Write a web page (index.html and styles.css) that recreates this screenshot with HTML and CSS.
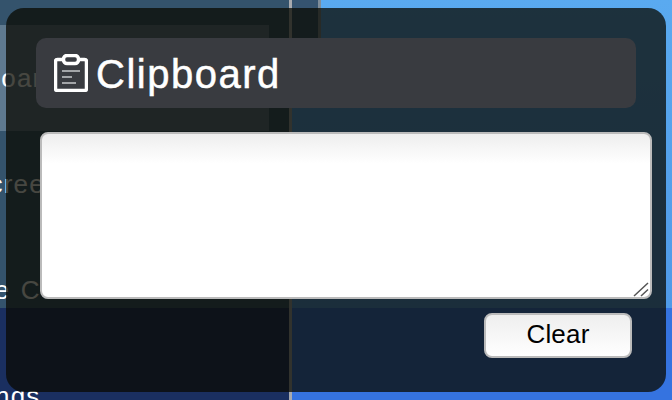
FILE: index.html
```html
<!DOCTYPE html>
<html lang="en">
<head>
<meta charset="utf-8">
<title>Clipboard</title>
<link rel="stylesheet" href="styles.css">
</head>
<body>
<div class="scene">
  <aside class="sidebar">
    <div class="sidebar-top"></div>
    <div class="item item-selected"><span class="item-label label-a">Clipboard</span></div>
    <div class="item"><span class="item-label label-b">Screenshot</span></div>
    <div class="item"><span class="item-label label-c">Remote Control</span></div>
    <div class="item"><span class="item-label label-d">Settings</span></div>
  </aside>
  <div class="divider"></div>
  <main class="main">
    <div class="main-top"></div>
  </main>

  <section class="panel">
    <header class="panel-header">
      <svg class="panel-icon" viewBox="0 0 34 38" width="34" height="38" aria-hidden="true">
        <path class="icon-body" d="M8 5.500H3.500a2 2 0 0 0-2 2v27a2 2 0 0 0 2 2h27a2 2 0 0 0 2-2v-27a2 2 0 0 0-2-2H26"/>
        <rect class="icon-clip" x="9.500" y="1.500" width="15" height="8" rx="3.500"/>
        <path class="icon-line" d="M8 17H26M8 23H18M8 29H22"/>
      </svg>
      <h1 class="panel-title">Clipboard</h1>
    </header>
    <div class="clip-wrap">
      <textarea class="clip-text"></textarea>
      <svg class="clip-grip" viewBox="0 0 16 15" width="16" height="15" aria-hidden="true">
        <path d="M1 14L15 1M8 14L15 7.500"/>
      </svg>
    </div>
    <div class="panel-actions">
      <button class="clear-btn" type="button">Clear</button>
    </div>
  </section>
</div>
</body>
</html>
```
FILE: styles.css
```css
* { box-sizing: border-box; }
html, body { margin: 0; padding: 0; }
body { width: 672px; height: 400px; overflow: hidden; font-family: "Liberation Sans", Arial, sans-serif; }

.scene { position: relative; display: flex; width: 672px; height: 400px; overflow: hidden; background: #3573e0; }

.sidebar { flex: none; display: flex; flex-direction: column; width: 289px; height: 400px; background: linear-gradient(#34536c 308px, #1a2f60 308px); overflow: hidden; }
.sidebar-top { flex: none; height: 25px; }
.item { flex: none; height: 106px; display: flex; align-items: center; white-space: nowrap; color: #fff; font-size: 26px; letter-spacing: 1.2px; }
.item-selected { width: 269px; background: #5f7a90; overflow: hidden; }
.label-a { margin-left: -64px; }
.label-b { margin-left: -29px; }
.label-c { margin-left: -88px; word-spacing: 2px; }
.label-d { margin-left: -63px; }

.divider { flex: none; width: 3px; height: 400px; background: #a8aaae; }

.main { flex: 1; height: 400px; background: linear-gradient(#5aaaf0, #4f9ae8 308px, #3573e0 308px); }
.main-top { width: 29px; height: 38px; background: #35536f; border-right: 3px solid #7f8d99; }

.panel { position: absolute; left: 6px; top: 8px; width: 660px; height: 384px; padding: 30px 14px 0 30px; border-radius: 18px; background: rgba(10, 10, 2, 0.75); display: flex; flex-direction: column; }
.panel-header { flex: none; height: 70px; margin-right: 16px; display: flex; align-items: center; gap: 8px; padding-left: 18px; background: #393b40; border-radius: 10px; }
.panel-icon { flex: none; }
.icon-body, .icon-clip { fill: none; stroke: #fff; stroke-width: 3.500; }
.icon-line { fill: none; stroke: #a3a5a8; stroke-width: 2; }
.panel-title { margin: 0; padding-top: 2px; font-size: 40px; line-height: 44px; font-weight: 400; letter-spacing: 1.5px; color: #fff; -webkit-text-stroke: 0.5px #fff; }

.clip-wrap { position: relative; flex: none; height: 167px; margin: 24px 0 0 4px; }
.clip-text { display: block; width: 100%; height: 100%; padding: 4px; resize: none; border: 2px solid #bbb; border-radius: 8px; background: linear-gradient(#eeeeee, #ffffff 30px); outline: none; }
.clip-grip { position: absolute; right: 3px; bottom: 2px; pointer-events: none; }
.clip-grip path { fill: none; stroke: #555; stroke-width: 1.500; }

.panel-actions { display: flex; justify-content: flex-end; margin-top: 14px; padding-right: 20px; }
.clear-btn { width: 148px; height: 45px; padding: 0 0 2px; border: 2px solid #bbb; border-radius: 8px; background: linear-gradient(#eeeeee, #ffffff); color: #000; font-family: "Liberation Sans", Arial, sans-serif; font-size: 26px; letter-spacing: 0.2px; }
```
